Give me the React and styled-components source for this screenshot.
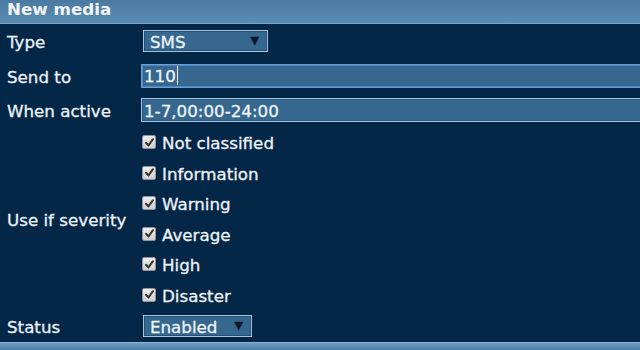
import React from "react";
import styled, { createGlobalStyle } from "styled-components";

const navy = "#042748";
const fieldFill = "#36678f";
const fieldBorder = "#a9c3da";
const textColor = "#eef3f8";

const GlobalStyle = createGlobalStyle`
  html, body {
    margin: 0;
    padding: 0;
    background: ${navy};
    overflow: hidden;
  }
  body {
    font-family: "DejaVu Sans", Verdana, sans-serif;
    color: ${textColor};
  }
`;

const severities = [
  "Not classified",
  "Information",
  "Warning",
  "Average",
  "High",
  "Disaster",
];

function App() {
  return (
    <Page>
      <GlobalStyle />
      <Header>New media</Header>
      <Form>
        <Label $h={34}>Type</Label>
        <Cell>
          <Select $w={125}>
            <span>SMS</span>
            <Arrow>▼</Arrow>
          </Select>
        </Cell>

        <Label $h={35}>Send to</Label>
        <Cell>
          <TextField $focused>
            110<Caret />
          </TextField>
        </Cell>

        <Label $h={34}>When active</Label>
        <Cell>
          <TextField>1-7,00:00-24:00</TextField>
        </Cell>

        <Label $h={183}>Use if severity</Label>
        <CheckList>
          {severities.map((s) => (
            <CheckRow key={s}>
              <Box>
                <svg width="11" height="11" viewBox="0 0 11 11">
                  <path
                    d="M2 5.8 L4.4 8.4 L9 2.2"
                    fill="none"
                    stroke="#3a3226"
                    strokeWidth="2"
                    strokeLinecap="round"
                    strokeLinejoin="round"
                  />
                </svg>
              </Box>
              <span>{s}</span>
            </CheckRow>
          ))}
        </CheckList>

        <Label $h={32}>Status</Label>
        <Cell>
          <Select $w={109}>
            <span>Enabled</span>
            <Arrow>▼</Arrow>
          </Select>
        </Cell>
      </Form>
      <Footer />
    </Page>
  );
}

const Page = styled.div`
  width: 640px;
  height: 350px;
  display: flex;
  flex-direction: column;
  background: ${navy};
  overflow: hidden;
`;

const Header = styled.div`
  height: 25px;
  box-sizing: border-box;
  padding-left: 7px;
  font-size: 16.7px;
  font-weight: 700;
  line-height: 18px;
  color: #f2f6fa;
  background: linear-gradient(#4a7aa0, #5a8bb2);
  border-bottom: 1px solid #7ea4c4;
`;

const Form = styled.div`
  display: grid;
  grid-template-columns: 141px 1fr;
  font-size: 16.7px;
  -webkit-text-stroke: 0.3px ${textColor};
`;

const Label = styled.div`
  height: ${(p) => p.$h}px;
  box-sizing: border-box;
  padding: 2px 0 0 7px;
  display: flex;
  align-items: center;
`;

const Cell = styled.div`
  display: flex;
  align-items: center;
`;

const Select = styled.div`
  width: ${(p) => p.$w}px;
  height: 22px;
  margin-left: 2px;
  box-sizing: border-box;
  border: 1px solid ${fieldBorder};
  box-shadow: inset 0 0 0 1px #22507a;
  background: ${fieldFill};
  display: flex;
  align-items: center;
  justify-content: space-between;
  padding: 2px 8px 0 6px;
  line-height: 1;
`;

const Arrow = styled.span`
  font-size: 11px;
  margin-top: -3px;
  color: #0b1a2a;
  -webkit-text-stroke: 0.4px #0b1a2a;
`;

const TextField = styled.div`
  width: 520px;
  height: 24px;
  flex-shrink: 0;
  box-sizing: border-box;
  border: 1px solid ${(p) => (p.$focused ? "#6d9fd6" : fieldBorder)};
  box-shadow: ${(p) =>
    p.$focused ? "inset 0 0 0 1px #4f86c0" : "inset 0 0 0 1px #2a5a84"};
  background: ${fieldFill};
  display: flex;
  align-items: center;
  padding: 2px 0 0 2px;
  line-height: 1;
`;

const Caret = styled.span`
  display: inline-block;
  width: 1px;
  height: 19px;
  margin: -2px 0 0 1px;
  background: #f4f8fc;
`;

const CheckList = styled.div`
  display: flex;
  flex-direction: column;
`;

const CheckRow = styled.div`
  height: 30.5px;
  box-sizing: border-box;
  padding-top: 2px;
  display: flex;
  align-items: center;
  gap: 6px;
`;

const Box = styled.span`
  width: 14px;
  height: 14px;
  margin: -2px 0 0 1px;
  box-sizing: border-box;
  border: 1px solid #8e96a0;
  border-radius: 2px;
  background: linear-gradient(#eeeeee, #cfcfcf);
  display: flex;
  align-items: center;
  justify-content: center;
`;

const Footer = styled.div`
  height: 7px;
  background: linear-gradient(#6a9cc4, #4a7fa8);
  border-top: 1px solid #8db3d2;
`;

export default App;
